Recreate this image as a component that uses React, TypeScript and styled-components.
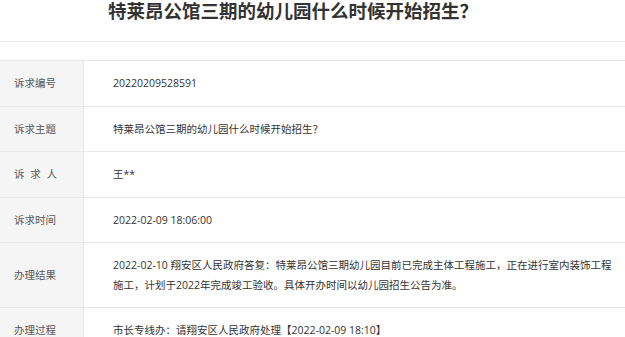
import React from "react";
import styled, { createGlobalStyle } from "styled-components";

const GlobalStyle = createGlobalStyle`
  html, body {
    margin: 0;
    padding: 0;
    background: #ffffff;
  }
  body {
    font-family: "Open Sans", "Noto Sans CJK SC", sans-serif;
    color: #333333;
  }
`;

const Page = styled.div`
  width: 625px;
  overflow: hidden;
`;

const Title = styled.h1`
  margin: 0;
  height: 41px;
  padding: 0 0 0 108px;
  box-sizing: content-box;
  border-bottom: 1px solid #e9e9e9;
  font-family: "Noto Sans CJK SC", sans-serif;
  font-size: 18.5px;
  font-weight: 700;
  line-height: 20px;
  color: #333333;
  white-space: nowrap;
`;

const Table = styled.div`
  margin-top: 18px;
  border-top: 1px solid #e9e9e9;
`;

const Row = styled.div<{ $tall?: boolean }>`
  display: grid;
  grid-template-columns: 84px 1fr;
  border-bottom: 1px solid #e9e9e9;
  min-height: ${(p) => (p.$tall ? "64px" : "44.5px")};
`;

const Label = styled.div<{ $spaced?: boolean }>`
  display: flex;
  align-items: center;
  padding-left: 14px;
  background: #f5f5f5;
  border-right: 1px solid #e9e9e9;
  font-size: 10.5px;
  line-height: 20px;
  color: #555555;
  word-spacing: ${(p) => (p.$spaced ? "3px" : "0")};
  white-space: pre;
`;

const Value = styled.div`
  display: flex;
  align-items: center;
  padding: 12px 6px 12px 29px;
  font-size: 10.5px;
  line-height: 20px;
  color: #333333;
`;

const rows: { label: string; value: string; spaced?: boolean; tall?: boolean }[] = [
  { label: "诉求编号", value: "20220209528591" },
  { label: "诉求主题", value: "特莱昂公馆三期的幼儿园什么时候开始招生？" },
  { label: "诉 求 人", value: "王**", spaced: true },
  { label: "诉求时间", value: "2022-02-09 18:06:00" },
  {
    label: "办理结果",
    value:
      "2022-02-10 翔安区人民政府答复：特莱昂公馆三期幼儿园目前已完成主体工程施工，正在进行室内装饰工程施工，计划于2022年完成竣工验收。具体开办时间以幼儿园招生公告为准。",
    tall: true,
  },
  { label: "办理过程", value: "市长专线办：请翔安区人民政府处理【2022-02-09 18:10】" },
];

export default function App() {
  return (
    <>
      <GlobalStyle />
      <Page>
        <Title>特莱昂公馆三期的幼儿园什么时候开始招生？</Title>
        <Table>
          {rows.map((r) => (
            <Row key={r.label} $tall={r.tall}>
              <Label $spaced={r.spaced}>{r.label}</Label>
              <Value>{r.value}</Value>
            </Row>
          ))}
        </Table>
      </Page>
    </>
  );
}
